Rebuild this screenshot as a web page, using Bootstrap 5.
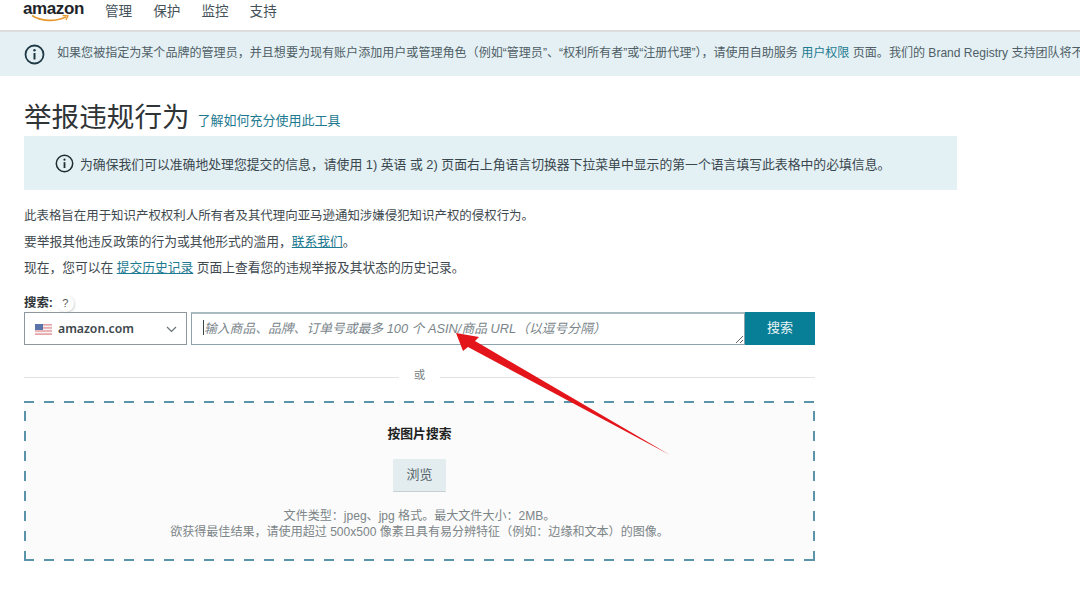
<!DOCTYPE html>
<html lang="zh-CN">
<head>
<meta charset="utf-8">
<title>举报违规行为</title>
<link href="https://cdn.jsdelivr.net/npm/bootstrap@5.3.0/dist/css/bootstrap.min.css" rel="stylesheet">
<style>
html,body{height:613px;overflow:hidden;}
body{font-family:"Liberation Sans","Noto Sans CJK SC",sans-serif;color:#333d42;background:#fff;position:relative;font-size:12.4px;}
.top-head{height:32px;border-bottom:2px solid #dcdedd;padding-left:23px;}
.brand-box{width:62px;height:30px;position:relative;}
.brand-word{font-size:17px;font-weight:700;color:#1d2428;letter-spacing:-.4px;line-height:1;position:absolute;left:0;top:0;}
.brand-smile{position:absolute;left:8px;top:14px;}
.top-links{margin-left:20px;gap:21px;font-size:13.6px;color:#45525a;}
.top-links span{line-height:23px;}
.wide-note{height:44px;background:#e4f0f4;padding-left:24px;white-space:nowrap;overflow:hidden;color:#4f5e66;font-size:12.05px;}
.wide-note svg{flex:none;margin-right:12px;}
.wide-note span{padding-bottom:2px;}
.aqua-link{color:#1e7a90;text-decoration:none;}
.under-link{color:#1e7a90;text-decoration:underline;}
.page-body{padding:0 24px;}
.title-row{height:60px;padding-top:25px;}
.main-title{font-size:27.6px;font-weight:400;margin:0;color:#2f3437;line-height:34px;}
.title-link{font-size:13px;margin-left:8px;padding-top:10px;}
.lang-note{width:933px;height:54px;background:#e3f0f4;padding-left:31px;font-size:12.84px;color:#3a474e;}
.lang-note svg{margin-right:6px;flex:none;}
.lang-note span{padding-top:4px;}
.para-list{margin-top:17px;}
.para-list p{margin:0;height:26.5px;line-height:18px;color:#3f4a50;font-size:12.75px;}
.para-list p.tight-line{font-size:12.45px;height:25.5px;}
.search-area{width:791px;margin-top:7px;}
.search-label{font-weight:700;font-size:12.4px;height:19px;padding-top:2px;color:#2f3437;}
.hint-dot{width:17px;height:17px;border-radius:50%;box-shadow:1px 1px 2px #d5d8d8;font-size:11px;font-weight:400;margin-left:4px;color:#555;}
.search-row{height:33px;}
.market-box{width:163px;height:33px;border:1px solid #8c989d;padding:3px 9px 0 10px;font-size:12.2px;font-weight:600;font-family:"Noto Sans",sans-serif;color:#3c464b;}
.market-box svg.flag-mark{margin-right:6px;}
.query-wrap{position:relative;margin-left:4px;width:554px;height:33px;}
.query-box{display:block;width:554px;height:33px;resize:both;border:1px solid #8da2ab;border-top:2px solid #a9bac1;border-radius:0;padding:5px 12px 1px;font-size:12.8px;font-style:italic;line-height:20px;background:#fff;outline:0;}
.query-box::placeholder{color:#7a858a;opacity:1;}
.caret-mark{position:absolute;left:12px;top:8px;width:1px;height:15px;background:#39444a;}
.go-btn{width:70px;height:33px;border:0;border-radius:0;background:#087f96;color:#e7f4f6;font-size:13px;padding:0;}
.go-btn:hover{background:#087f96;color:#e7f4f6;}
.or-row{margin-top:23px;height:20px;font-size:11.5px;color:#767f83;gap:15px;}
.or-row span:nth-child(2){padding-bottom:4px;}
.or-line{height:1px;background:#dfe3e3;flex:1;}
.drop-zone{margin-top:13px;height:160px;background-color:#fbfbfb;
  background-image:repeating-linear-gradient(90deg,#5a94aa 0 10px,transparent 10px 20px),repeating-linear-gradient(90deg,#5a94aa 0 10px,transparent 10px 20px),repeating-linear-gradient(0deg,#5a94aa 0 10px,transparent 10px 20px),repeating-linear-gradient(0deg,#5a94aa 0 10px,transparent 10px 20px);
  background-size:100% 2px,100% 2px,2px 100%,2px 100%;background-position:0 0,0 100%,0 0,100% 0;background-repeat:no-repeat;
  text-align:center;padding-top:24px;}
.drop-title{font-size:12.8px;font-weight:700;color:#222;line-height:18px;}
.browse-btn{width:53px;height:33px;background:#e3ecee;border:0;border-bottom:1px solid #c6d0d3;border-radius:1px;color:#55646b;font-size:13px;padding:0;margin-top:16px;}
.browse-btn:hover{background:#e3ecee;color:#55646b;}
.drop-note{margin-top:16px;font-size:12.05px;line-height:16px;color:#7c8588;}
.red-arrow{position:absolute;left:0;top:0;pointer-events:none;}
</style>
</head>
<body>
<header class="top-head d-flex align-items-start">
  <div class="brand-box">
    <span class="brand-word">amazon</span>
    <svg class="brand-smile" width="46" height="9" viewBox="0 0 46 9"><path d="M1 1.500C10 7.500 24 8 35 3" fill="none" stroke="#e59a2f" stroke-width="1.600"/><path d="M31.500 1.500L37 1.800L35 6" fill="none" stroke="#e59a2f" stroke-width="1.300"/></svg>
  </div>
  <nav class="top-links d-flex">
    <span>管理</span><span>保护</span><span>监控</span><span>支持</span>
  </nav>
</header>
<div class="wide-note d-flex align-items-center">
  <svg width="21" height="21" viewBox="0 0 21 21"><circle cx="10.500" cy="10.500" r="9" fill="none" stroke="#1f3a46" stroke-width="1.800"/><circle cx="10.500" cy="6.300" r="1.200" fill="#1f3a46"/><rect x="9.500" y="9" width="2" height="6.500" fill="#1f3a46"/></svg>
  <span>如果您被指定为某个品牌的管理员，并且想要为现有账户添加用户或管理角色（例如“管理员”、“权利所有者”或“注册代理”），请使用自助服务 <a class="aqua-link" href="#">用户权限</a> 页面。我们的 Brand Registry 支持团队将不</span>
</div>
<main class="page-body">
  <div class="title-row d-flex align-items-start">
    <h1 class="main-title">举报违规行为</h1>
    <a class="aqua-link title-link" href="#">了解如何充分使用此工具</a>
  </div>
  <div class="lang-note d-flex align-items-center">
    <svg width="19" height="19" viewBox="0 0 19 19"><circle cx="9.500" cy="9.500" r="8.200" fill="none" stroke="#1f2d33" stroke-width="1.500"/><circle cx="9.500" cy="5.700" r="1.100" fill="#1f2d33"/><rect x="8.600" y="8.200" width="1.800" height="5.800" fill="#1f2d33"/></svg>
    <span>为确保我们可以准确地处理您提交的信息，请使用 1) 英语 或 2) 页面右上角语言切换器下拉菜单中显示的第一个语言填写此表格中的必填信息。</span>
  </div>
  <div class="para-list">
    <p class="tight-line">此表格旨在用于知识产权权利人所有者及其代理向亚马逊通知涉嫌侵犯知识产权的侵权行为。</p>
    <p>要举报其他违反政策的行为或其他形式的滥用，<a class="under-link" href="#">联系我们</a>。</p>
    <p>现在，您可以在 <a class="under-link" href="#">提交历史记录</a> 页面上查看您的违规举报及其状态的历史记录。</p>
  </div>
  <section class="search-area">
    <div class="search-label d-flex align-items-center">搜索:<span class="hint-dot d-inline-flex align-items-center justify-content-center">?</span></div>
    <div class="search-row d-flex align-items-start">
      <div class="market-box d-flex align-items-center">
        <svg class="flag-mark" width="17" height="11" viewBox="0 0 17 11"><rect width="17" height="11" fill="#e8a5a8"/><rect y="1.600" width="17" height="1.500" fill="#f4f2f4"/><rect y="4.700" width="17" height="1.500" fill="#f4f2f4"/><rect y="7.800" width="17" height="1.500" fill="#f4f2f4"/><rect width="8" height="6" fill="#5a73a8"/></svg>
        <span>amazon.com</span>
        <svg class="ms-auto" width="11" height="7" viewBox="0 0 11 7"><path d="M1 1l4.500 4.500L10 1" fill="none" stroke="#667277" stroke-width="1.200"/></svg>
      </div>
      <div class="query-wrap">
        <textarea class="query-box" placeholder="输入商品、品牌、订单号或最多 100 个 ASIN/商品 URL（以逗号分隔）"></textarea>
        <span class="caret-mark"></span>
      </div>
      <button class="btn go-btn" type="button">搜索</button>
    </div>
    <div class="or-row d-flex align-items-center"><span class="or-line"></span><span>或</span><span class="or-line"></span></div>
    <div class="drop-zone">
      <div class="drop-title">按图片搜索</div>
      <button class="btn browse-btn" type="button">浏览</button>
      <div class="drop-note">文件类型：jpeg、jpg 格式。最大文件大小：2MB。<br>欲获得最佳结果，请使用超过 500x500 像素且具有易分辨特征（例如：边缘和文本）的图像。</div>
    </div>
  </section>
</main>
<svg class="red-arrow" width="1080" height="613" viewBox="0 0 1080 613"><polygon points="456,333 479,337 475,341 670,455 468,347 463,351" fill="#e3151a"/></svg>
</body>
</html>
